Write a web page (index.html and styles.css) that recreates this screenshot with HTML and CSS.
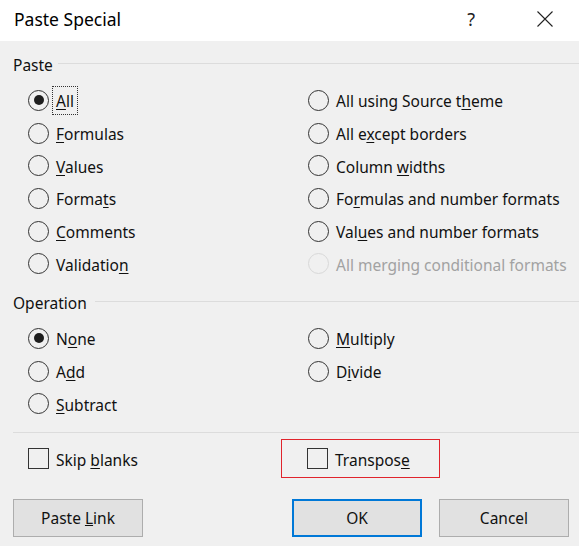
FILE: index.html
```html
<!DOCTYPE html>
<html>
<head>
<meta charset="utf-8">
<link rel="stylesheet" href="styles.css">
</head>
<body>
<div class="dialog">
  <div class="titlebar">
    <span class="title">Paste Special</span>
    <span class="help">?</span>
    <span class="close">
      <svg width="16" height="16" viewBox="0 0 16 16"><path d="M0.5 0.5 L15.5 15.5 M15.5 0.5 L0.5 15.5" stroke="#222" stroke-width="1.1" fill="none"/></svg>
    </span>
  </div>
  <div class="content">
    <div class="group-head"><span class="group-label">Paste</span><span class="rule"></span></div>
    <div class="options six">
      <div class="opt"><span class="radio checked"></span><span class="text focus"><u>A</u>ll</span></div>
      <div class="opt"><span class="radio"></span><span class="text"><u>F</u>ormulas</span></div>
      <div class="opt"><span class="radio"></span><span class="text"><u>V</u>alues</span></div>
      <div class="opt"><span class="radio"></span><span class="text">Forma<u>t</u>s</span></div>
      <div class="opt"><span class="radio"></span><span class="text"><u>C</u>omments</span></div>
      <div class="opt"><span class="radio"></span><span class="text">Validatio<u>n</u></span></div>
      <div class="opt"><span class="radio"></span><span class="text">All using Source t<u>h</u>eme</span></div>
      <div class="opt"><span class="radio"></span><span class="text">All e<u>x</u>cept borders</span></div>
      <div class="opt"><span class="radio"></span><span class="text">Column <u>w</u>idths</span></div>
      <div class="opt"><span class="radio"></span><span class="text">Fo<u>r</u>mulas and number formats</span></div>
      <div class="opt"><span class="radio"></span><span class="text">Val<u>u</u>es and number formats</span></div>
      <div class="opt disabled"><span class="radio"></span><span class="text">All merging conditional formats</span></div>
    </div>
    <div class="group-head second"><span class="group-label">Operation</span><span class="rule op"></span></div>
    <div class="options three">
      <div class="opt"><span class="radio checked"></span><span class="text">N<u>o</u>ne</span></div>
      <div class="opt"><span class="radio"></span><span class="text">A<u>d</u>d</span></div>
      <div class="opt"><span class="radio"></span><span class="text"><u>S</u>ubtract</span></div>
      <div class="opt"><span class="radio"></span><span class="text"><u>M</u>ultiply</span></div>
      <div class="opt"><span class="radio"></span><span class="text">D<u>i</u>vide</span></div>
    </div>
    <div class="separator"></div>
    <div class="checks">
      <div class="check-item"><span class="checkbox"></span><span class="text">Skip <u>b</u>lanks</span></div>
      <div class="check-item highlight"><span class="checkbox"></span><span class="text">Transpos<u>e</u></span></div>
    </div>
    <div class="buttons">
      <button class="btn">Paste <u>L</u>ink</button>
      <button class="btn primary">OK</button>
      <button class="btn">Cancel</button>
    </div>
  </div>
</div>
</body>
</html>
```

FILE: styles.css
```css
html, body {
  margin: 0;
  padding: 0;
  background: #f0f0f0;
}
.dialog {
  width: 579px;
  height: 546px;
  overflow: hidden;
  font-family: "Noto Sans", "Open Sans", sans-serif;
  font-size: 15.5px;
  color: #111;
  background: #f0f0f0;
}
.titlebar {
  height: 41px;
  background: #fff;
  display: flex;
  align-items: center;
}
.title {
  margin-left: 14px;
  font-size: 17.5px;
  color: #000;
  margin-top: -3px;
}
.help {
  margin-left: auto;
  margin-right: 62px;
  font-size: 18px;
  color: #222;
  margin-top: -4px;
}
.close {
  margin-right: 26px;
  display: flex;
  margin-top: -4px;
}
.content {
  padding: 13px 0 0 13px;
}
.group-head {
  height: 20px;
  display: flex;
  align-items: center;
}
.group-head.second {
  margin-top: 12px;
}
.group-label {
  color: #111;
  padding-top: 1px;
}
.rule {
  flex: 1;
  height: 1px;
  background: #dcdcdc;
  margin-left: 5px;
  margin-top: -1px;
}
.rule.op {
  margin-left: 8px;
  margin-top: -2px;
}
.options {
  margin-top: 10px;
  margin-left: 15px;
  display: grid;
  grid-auto-flow: column;
  grid-template-columns: 280px 1fr;
}
.options.six {
  grid-template-rows: repeat(6, 32.7px);
}
.options.three {
  grid-template-rows: repeat(3, 32.7px);
}
.opt {
  display: flex;
  align-items: center;
}
.radio {
  width: 19px;
  height: 19px;
  border: 1.2px solid #333;
  border-radius: 50%;
  box-sizing: content-box;
  flex: none;
  display: flex;
  align-items: center;
  justify-content: center;
}
.radio.checked::after {
  content: "";
  width: 10px;
  height: 10px;
  border-radius: 50%;
  background: #1e1e1e;
}
.text {
  margin-left: 7px;
  padding-top: 2px;
  white-space: nowrap;
}
.text u {
  text-underline-offset: 2px;
}
.focus {
  outline: 1px dotted #333;
  outline-offset: 2px;
  padding: 1px 1px 0;
  margin-left: 6px;
}
.disabled .radio {
  border-color: #d8d8d8;
}
.disabled .text {
  color: #a2a2a2;
}
.separator {
  margin-top: 12px;
  height: 1px;
  background: #dcdcdc;
}
.checks {
  margin-top: 6px;
  height: 39px;
  display: flex;
  align-items: center;
}
.check-item {
  display: flex;
  align-items: center;
}
.check-item:first-child {
  margin-left: 15px;
  width: 253px;
}
.checkbox {
  width: 19px;
  height: 19px;
  border: 1.2px solid #333;
  box-sizing: content-box;
  flex: none;
}
.check-item.highlight {
  height: 37px;
  width: 132px;
  border: 1px solid #e0242c;
  padding-left: 25px;
}
.buttons {
  margin-top: 21px;
  display: flex;
  padding-right: 10px;
}
.btn {
  width: 130px;
  height: 38px;
  background: #e1e1e1;
  border: 1px solid #adadad;
  font-family: "Noto Sans", "Open Sans", sans-serif;
  font-size: 15.5px;
  color: #111;
  padding: 0;
}
.btn.primary {
  margin-left: auto;
  border: 2px solid #0078d7;
  margin-right: 17px;
}
```
